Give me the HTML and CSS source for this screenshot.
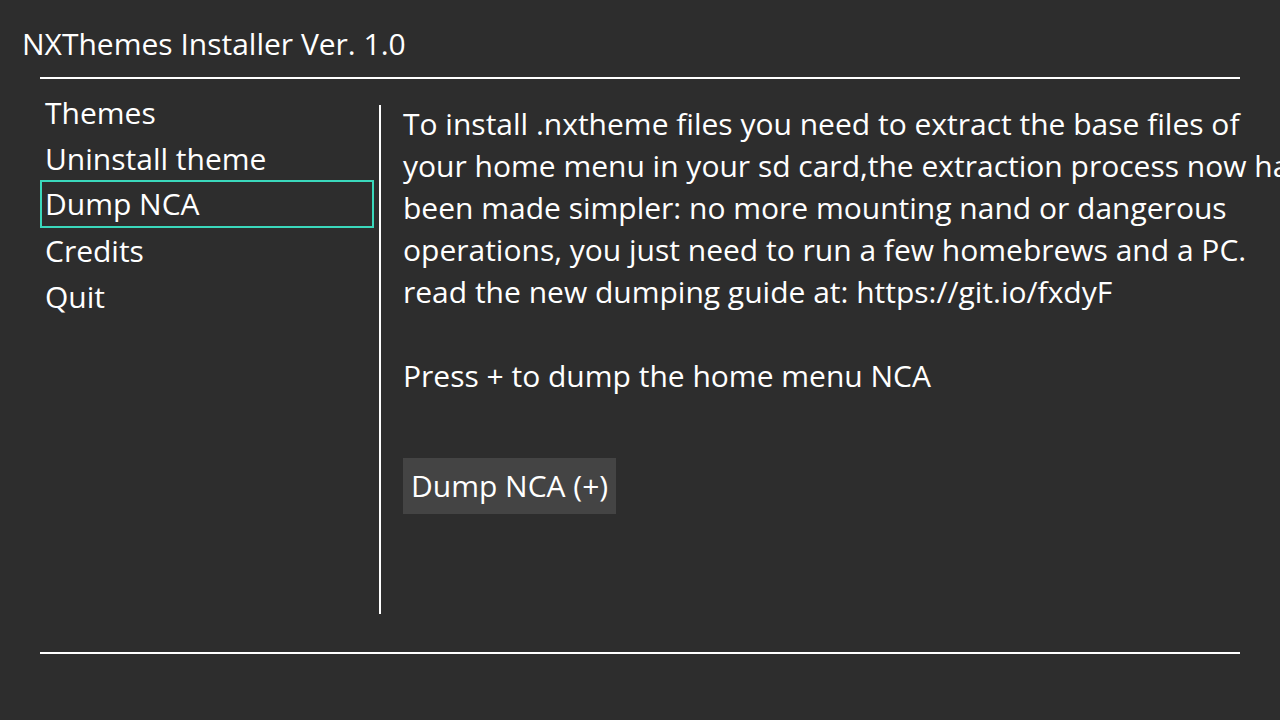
FILE: index.html
```html
<!DOCTYPE html>
<html>
<head>
<meta charset="utf-8">
<link rel="stylesheet" href="styles.css">
</head>
<body>
<div class="screen">
  <header class="header">NXThemes Installer Ver. 1.0</header>
  <div class="rule"></div>
  <main class="main">
    <nav class="sidebar">
      <div class="item">Themes</div>
      <div class="item">Uninstall theme</div>
      <div class="item selected">Dump NCA</div>
      <div class="item">Credits</div>
      <div class="item">Quit</div>
    </nav>
    <div class="divider"></div>
    <section class="content">
      <div class="text">To install .nxtheme files you need to extract the base files of
your home menu in your sd card,the extraction process now has
been made simpler: no more mounting nand or dangerous
operations, you just need to run a few homebrews and a PC.
read the new dumping guide at: https://git.io/fxdyF

Press + to dump the home menu NCA</div>
      <div class="button">Dump NCA (+)</div>
    </section>
  </main>
  <div class="rule"></div>
</div>
</body>
</html>
```
FILE: styles.css
```css
html, body {
  margin: 0;
  padding: 0;
  background: #2d2d2d;
}
.screen {
  width: 1280px;
  height: 720px;
  overflow: hidden;
  background: #2d2d2d;
  color: #ffffff;
  font-family: "Open Sans", "Noto Sans", sans-serif;
  display: flex;
  flex-direction: column;
}
.header {
  font-size: 30px;
  line-height: 40px;
  padding: 24px 0 0 22px;
  box-sizing: border-box;
  height: 77px;
}
.rule {
  height: 2px;
  background: #ffffff;
  margin: 0 40px;
  flex: none;
}
.main {
  display: flex;
  height: 573px;
  flex: none;
}
.sidebar {
  width: 379px;
  padding: 11px 0 0 40px;
  box-sizing: border-box;
  flex: none;
}
.item {
  width: 334px;
  height: 46px;
  line-height: 46px;
  font-size: 30px;
  padding-left: 5px;
  box-sizing: border-box;
}
.item.selected {
  border: 2px solid #3ad8bc;
  margin-top: -2px;
  height: 48px;
  padding-left: 3px;
  line-height: 44px;
}
.divider {
  width: 2px;
  height: 509px;
  margin-top: 26px;
  background: #ffffff;
  flex: none;
}
.content {
  padding: 24px 0 0 22px;
  flex: 1;
  min-width: 0;
  overflow: hidden;
}
.text {
  white-space: pre;
  font-size: 30px;
  line-height: 42px;
}
.button {
  display: inline-block;
  margin-top: 61px;
  background: #444444;
  font-size: 30px;
  height: 56px;
  line-height: 56px;
  padding: 0 8px;
}
```
